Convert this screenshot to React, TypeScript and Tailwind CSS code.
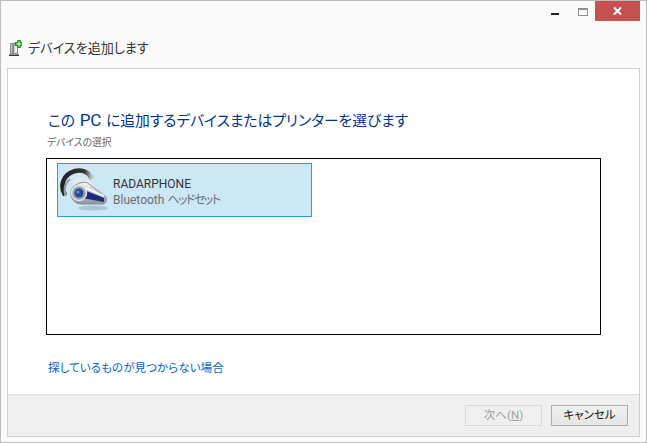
const font = "font-['Roboto','Noto_Sans_CJK_JP',sans-serif]";

function DeviceAddIcon() {
  return (
    <svg width="13" height="17" viewBox="0 0 13 17" className="shrink-0">
      <rect x="1.500" y="3.500" width="7" height="10" fill="#c9c9c9" stroke="#8a8a8a" />
      <rect x="3" y="4" width="2" height="9" fill="#8a8a8a" />
      <rect x="6" y="4" width="2" height="9" fill="#efefef" />
      <rect x="0" y="14.500" width="10" height="1.500" fill="#333" />
      <path d="M6 2.500h2.500V0.500h3v2H13v3h-1.500v2h-3v-2H6z" fill="#22b014" stroke="#0c7a08" strokeWidth="0.7" />
      <path d="M9.500 1.500h1v2h2v1h-2v2h-1v-2h-2v-1h2z" fill="#d8ffd0" />
    </svg>
  );
}

function HeadsetIcon() {
  return (
    <svg width="50" height="46" viewBox="0 0 50 46" className="shrink-0">
      <defs>
        <linearGradient id="body" x1="0" y1="0" x2="0" y2="1">
          <stop offset="0" stopColor="#f4f4f4" />
          <stop offset="1" stopColor="#8d969e" />
        </linearGradient>
        <linearGradient id="hook" x1="0" y1="0" x2="1" y2="0">
          <stop offset="0" stopColor="#222" />
          <stop offset="0.75" stopColor="#333" />
          <stop offset="1" stopColor="#c8c8c8" />
        </linearGradient>
      </defs>
      <ellipse cx="34" cy="41" rx="15" ry="2.500" fill="#8fa3ae" opacity="0.5" />
      <path d="M6 28C0 18 5 7 16 4C24 2 31 6 33 12" fill="none" stroke="url(#hook)" strokeWidth="4.500" />
      <path d="M7 29C4 23 6 16 11 12" fill="none" stroke="#9a9a9a" strokeWidth="2" />
      <path d="M14 15C21 10 29 12 33 20" fill="none" stroke="#e8e8e8" strokeWidth="4" />
      <path d="M14 20C20 15 27 14 30 17L46 29C49 32 47 38 43 37L22 37C13 37 9 26 14 20Z" fill="url(#body)" stroke="#7a8288" strokeWidth="0.8" />
      <path d="M25 23L45 31L45 35L23 31Z" fill="#1c2a86" />
      <path d="M27 21L45 29" stroke="#fff" strokeWidth="1.500" />
      <circle cx="20" cy="26" r="7.500" fill="#9aa3aa" stroke="#e6e6e6" strokeWidth="1.500" />
      <circle cx="20" cy="26" r="4.500" fill="#274a9c" />
      <circle cx="19" cy="25" r="1.500" fill="#6c8fd6" />
    </svg>
  );
}

export default function App() {
  return (
    <div className={`${font} [font-feature-settings:"palt"] w-[647px] h-[443px] flex flex-col bg-[#fafafa] border border-[#bdbdbd] overflow-hidden`}>
      <div className="h-5 shrink-0 flex justify-end pr-[6px]">
        <div className="w-[30px] flex items-end justify-center pb-[6px]">
          <div className="w-2 h-[2px] bg-[#222]" />
        </div>
        <div className="w-[25px] flex items-center justify-center">
          <div className="w-[10px] h-2 border border-[#8f8f8f] border-t-2 mt-[2px]" />
        </div>
        <div className="w-[45px] bg-[#c75050] flex items-center justify-center">
          <svg width="9" height="8" viewBox="0 0 9 8">
            <path d="M1 0.500L8 7.500M8 0.500L1 7.500" stroke="#fff" strokeWidth="2" />
          </svg>
        </div>
      </div>

      <div className="h-[47px] shrink-0 flex items-center gap-[6px] pl-[8px] pt-[8px]">
        <DeviceAddIcon />
        <span className="text-[13.100px] leading-5 text-[#333] whitespace-nowrap">デバイスを追加します</span>
      </div>

      <div className="mx-[6px] mb-[5px] flex-1 min-h-0 flex flex-col border border-[#cfcfcf] bg-white">
        <div className="flex-1 min-h-0 flex flex-col pl-[38px] pr-[38px] pt-[41px]">
          <h1 className="ml-[2px] h-[22px] text-[14.750px] leading-[22px] font-normal text-[#003399] whitespace-nowrap [word-spacing:1px]">
            この <span className="text-[17px] leading-none">PC</span> に追加するデバイスまたはプリンターを選びます
          </h1>
          <div className="mt-[3px] ml-[1px] text-[9.800px] leading-[16px] text-[#666] whitespace-nowrap">デバイスの選択</div>
          <div className="mt-[7px] h-[177px] border border-black pl-[10px] pt-1">
            <div className="w-[255px] h-[54px] flex items-center bg-[#cbe8f6] border border-[#26a0da] pl-[1px] gap-[4px]">
              <HeadsetIcon />
              <div className="flex flex-col pt-[3px]">
                <span className="text-[12px] leading-[16px] text-[#333]">RADARPHONE</span>
                <span className="text-[12px] leading-[16px] text-[#6d6d6d] whitespace-nowrap">
                  Bluetooth <span className="tracking-[-1.500px]">ヘッドセット</span>
                </span>
              </div>
            </div>
          </div>
          <a className="mt-[24px] ml-[2px] text-[11.600px] leading-[18px] text-[#0066cc] whitespace-nowrap">探しているものが見つからない場合</a>
        </div>
        <div className="h-[42px] shrink-0 flex items-center justify-end gap-[9px] pr-[11px] bg-[#efefef] border-t border-[#dcdcdc]">
          <button className="w-[77px] h-[21px] text-[11.500px] leading-none text-[#a0a0a0] border border-[#d9d9d9] bg-[#efefef]">
            次へ(<span className="underline">N</span>)
          </button>
          <button className="w-[77px] h-[21px] text-[11.500px] leading-none text-[#111] border border-[#adadad] bg-gradient-to-b from-[#f0f0f0] to-[#e5e5e5]">
            キャンセル
          </button>
        </div>
      </div>
    </div>
  );
}
